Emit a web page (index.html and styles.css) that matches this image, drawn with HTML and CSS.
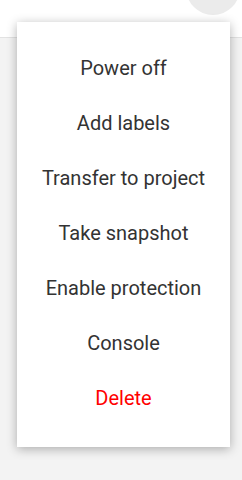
FILE: index.html
```html
<!DOCTYPE html>
<html>
<head>
<meta charset="utf-8">
<link rel="stylesheet" href="styles.css">
</head>
<body>
<div class="page">
  <header class="topbar">
    <div class="avatar"></div>
  </header>
  <main class="content"></main>
  <ul class="menu">
    <li class="item">Power off</li>
    <li class="item">Add labels</li>
    <li class="item">Transfer to project</li>
    <li class="item">Take snapshot</li>
    <li class="item">Enable protection</li>
    <li class="item">Console</li>
    <li class="item danger">Delete</li>
  </ul>
</div>
</body>
</html>
```
FILE: styles.css
```css
html, body {
  margin: 0;
  padding: 0;
  height: 100%;
}
body {
  font-family: Roboto, "Noto Sans", sans-serif;
  background: #f3f3f3;
}
.page {
  position: relative;
  height: 480px;
  display: flex;
  flex-direction: column;
  overflow: hidden;
}
.topbar {
  height: 37px;
  background: #ffffff;
  border-bottom: 1px solid #e2e2e2;
  position: relative;
  flex: none;
}
.avatar {
  position: absolute;
  width: 54px;
  height: 54px;
  border-radius: 50%;
  background: #ebebeb;
  right: 2px;
  top: -39px;
}
.content {
  flex: 1;
  background: #f3f3f3;
}
.menu {
  position: absolute;
  left: 17px;
  top: 22px;
  width: 213px;
  margin: 0;
  padding: 19px 0 21px;
  list-style: none;
  background: #ffffff;
  box-shadow: 0 2px 10px rgba(0, 0, 0, 0.3);
  box-sizing: border-box;
}
.item {
  height: 55px;
  line-height: 55px;
  text-align: center;
  font-size: 20px;
  color: #333333;
}
.danger {
  color: #ff0000;
}
```
